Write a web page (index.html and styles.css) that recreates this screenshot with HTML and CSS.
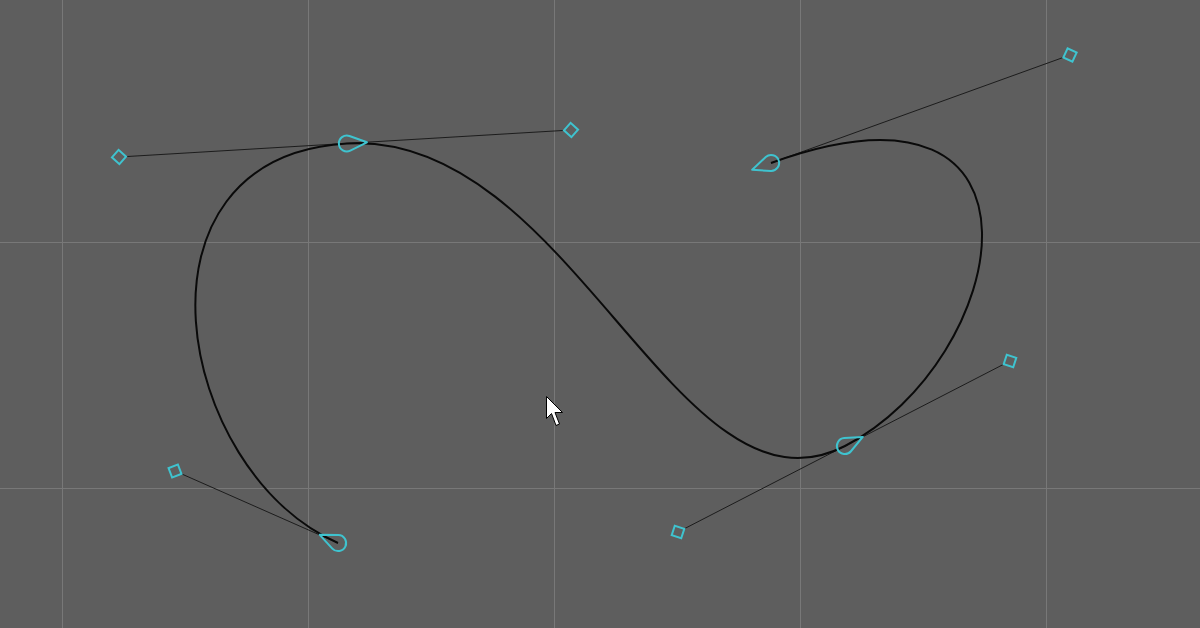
FILE: index.html
```html
<!DOCTYPE html>
<html>
<head>
<meta charset="utf-8">
<link rel="stylesheet" href="styles.css">
</head>
<body>
<div class="canvas">
  <svg class="scene" viewBox="0 0 1200 628" width="1200" height="628">
    <g class="handle-lines">
      <line x1="338" y1="543" x2="175" y2="471"/>
      <line x1="119" y1="157" x2="571" y2="130"/>
      <line x1="678" y1="532" x2="1010" y2="361"/>
      <line x1="771" y1="163" x2="1070" y2="55"/>
    </g>
    <path class="curve" d="M338 543 C175 471 119 157 347 143.5 C571 130 678 532 845 446 C1010 361 1070 55 771 163"/>
    <g class="handles">
      <rect x="-5" y="-5" width="10" height="10" transform="translate(175 471) rotate(69)"/>
      <rect x="-5" y="-5" width="10" height="10" transform="translate(119 157) rotate(41.6)"/>
      <rect x="-5" y="-5" width="10" height="10" transform="translate(571 130) rotate(41.6)"/>
      <rect x="-5" y="-5" width="10" height="10" transform="translate(678 532) rotate(17.9)"/>
      <rect x="-5" y="-5" width="10" height="10" transform="translate(1010 361) rotate(17.9)"/>
      <rect x="-5" y="-5" width="10" height="10" transform="translate(1070 55) rotate(25.1)"/>
    </g>
    <g class="anchors">
      <path d="M20 0 L2.9 -7.4 A8 8 0 1 0 2.9 7.4 Z" transform="translate(338 543) rotate(204)"/>
      <path d="M20 0 L2.9 -7.4 A8 8 0 1 0 2.9 7.4 Z" transform="translate(347 143.5) rotate(-3.4)"/>
      <path d="M20 0 L2.9 -7.4 A8 8 0 1 0 2.9 7.4 Z" transform="translate(845 446) rotate(-27.1)"/>
      <path d="M20 0 L2.9 -7.4 A8 8 0 1 0 2.9 7.4 Z" transform="translate(771 163) rotate(160.1)"/>
    </g>
    <path class="cursor" d="M546.5 396.5 L546.5 418.5 L551.5 413.5 L556 425.5 L559.5 424 L555 412.5 L562.5 412.5 Z"/>
  </svg>
</div>
</body>
</html>
```

FILE: styles.css
```css
html, body {
  margin: 0;
  padding: 0;
  background: #5e5e5e;
}

.canvas {
  width: 1200px;
  height: 628px;
  overflow: hidden;
  background-color: #5e5e5e;
  background-image:
    linear-gradient(to right, #787878 0, #787878 1px, transparent 1px),
    linear-gradient(to bottom, #787878 0, #787878 1px, transparent 1px);
  background-size: 246px 246px;
  background-position: 62px 242px;
}

.scene {
  display: block;
}

.handle-lines line {
  stroke: #1c1c1c;
  stroke-width: 1;
}

.curve {
  fill: none;
  stroke: #0a0a0a;
  stroke-width: 2;
}

.handles rect {
  fill: #5e5e5e;
  stroke: #3fc3cf;
  stroke-width: 2;
}

.anchors path {
  fill: none;
  stroke: #3fc3cf;
  stroke-width: 2;
  stroke-linejoin: round;
}

.cursor {
  fill: #ffffff;
  stroke: #000000;
  stroke-width: 1;
  stroke-linejoin: miter;
}
```
